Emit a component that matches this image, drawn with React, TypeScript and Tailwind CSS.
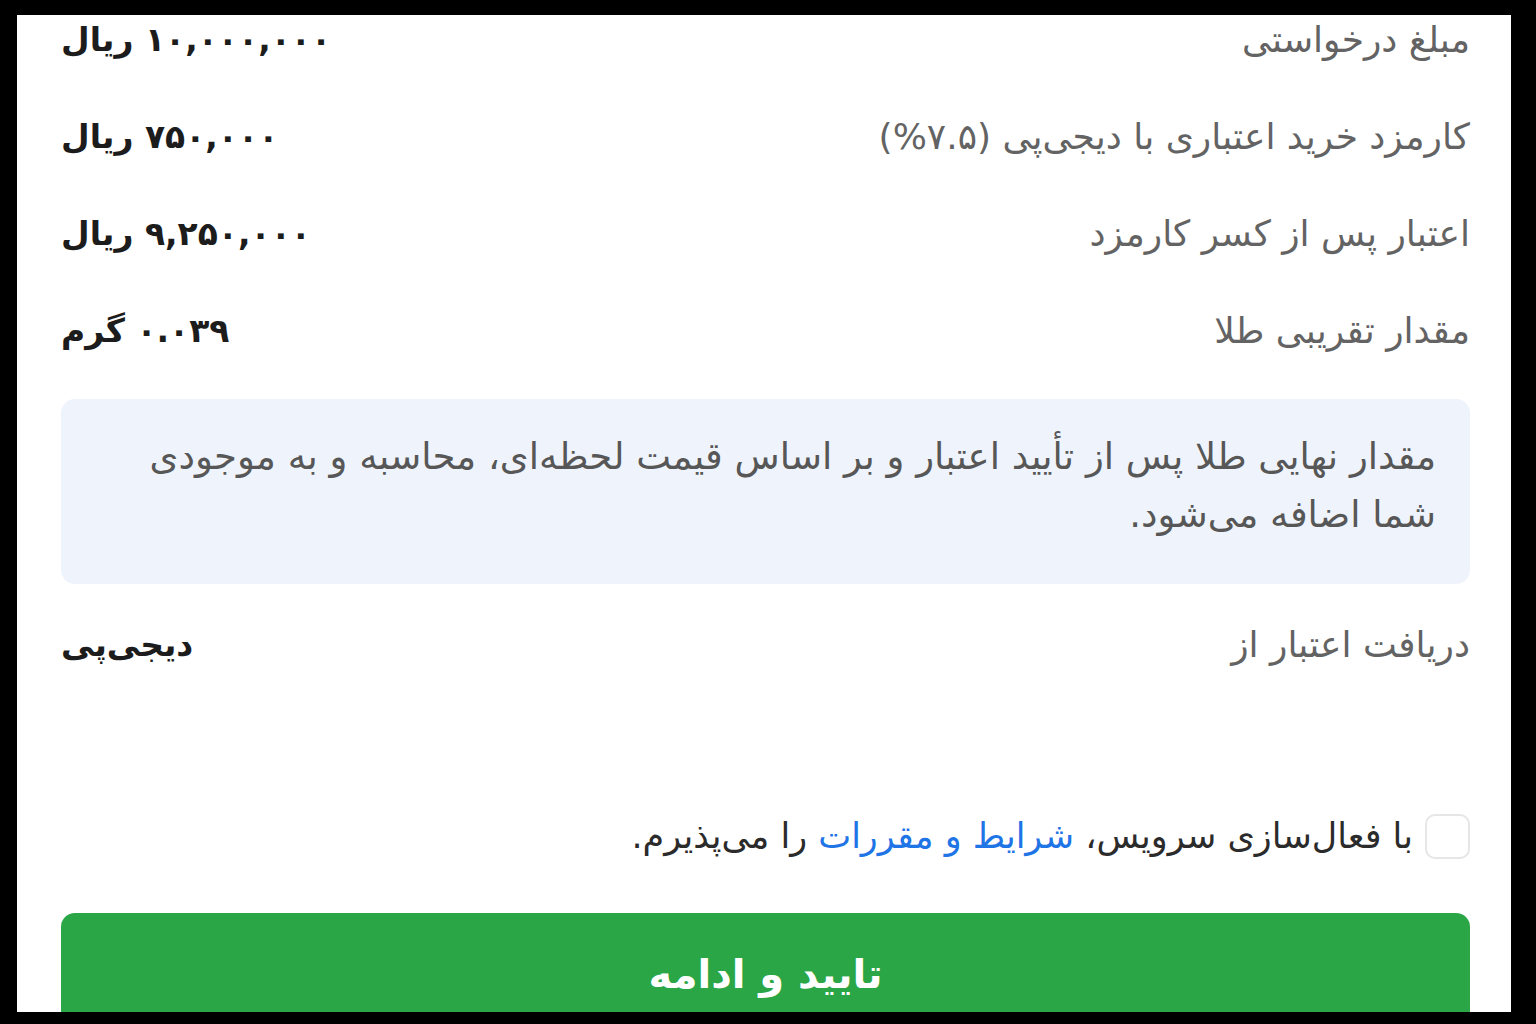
import React from "react";

const rows: { label: string; value: string }[] = [
  { label: "مبلغ درخواستی", value: "۱۰,۰۰۰,۰۰۰ ریال" },
  { label: "کارمزد خرید اعتباری با دیجی‌پی (۷.۵%)", value: "۷۵۰,۰۰۰ ریال" },
  { label: "اعتبار پس از کسر کارمزد", value: "۹,۲۵۰,۰۰۰ ریال" },
  { label: "مقدار تقریبی طلا", value: "۰.۰۳۹ گرم" },
];

export default function App() {
  return (
    <div className="w-[1536px] h-[1024px] bg-black pt-[15px] pl-[17px] overflow-hidden">
      <div
        dir="rtl"
        className="w-[1494px] h-[997px] bg-white pr-[41px] pl-[44px] overflow-hidden"
        style={{ fontFamily: '"DejaVu Sans", sans-serif' }}
      >
        <div className="mt-[-24px] flex flex-col">
          {rows.map((r) => (
            <div key={r.label} className="h-[97px] flex items-center justify-between">
              <span className="text-[36px] text-[#636363]">{r.label}</span>
              <span className="text-[33px] font-bold text-[#1c1c1c]">{r.value}</span>
            </div>
          ))}
        </div>
        <div className="mt-[20px] rounded-[14px] bg-[#eff4fc] pr-[34px] pl-[34px] pt-[29px] h-[185px]">
          <p className="text-[37px] leading-[58px] text-[#575757]">
            مقدار نهایی طلا پس از تأیید اعتبار و بر اساس قیمت لحظه‌ای، محاسبه و به موجودی شما اضافه می‌شود.
          </p>
        </div>
        <div className="mt-[12px] h-[97px] flex items-center justify-between">
          <span className="text-[36px] text-[#636363]">دریافت اعتبار از</span>
          <span className="text-[33px] font-bold text-[#1c1c1c]">دیجی‌پی</span>
        </div>
        <div className="mt-[117px] h-[52px] flex items-center gap-[12px]">
          <div className="w-[45px] h-[45px] rounded-[10px] border-2 border-[#e6e6e6] bg-white shrink-0" />
          <span className="text-[35px] text-[#2b2b2b]">
            با فعال‌سازی سرویس، <span className="text-[#1f74e6]">شرایط و مقررات</span> را می‌پذیرم.
          </span>
        </div>
        <button className="mt-[51px] w-full h-[122px] rounded-[14px] bg-[#2aa646] text-white text-[40px] font-bold flex items-center justify-center">
          تایید و ادامه
        </button>
      </div>
    </div>
  );
}
